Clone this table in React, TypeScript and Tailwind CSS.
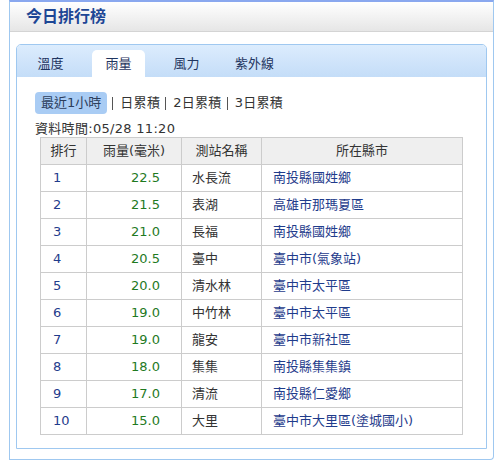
import React from "react";

const rows = [
  { rank: 1, rain: "22.5", station: "水長流", county: "南投縣國姓鄉" },
  { rank: 2, rain: "21.5", station: "表湖", county: "高雄市那瑪夏區" },
  { rank: 3, rain: "21.0", station: "長福", county: "南投縣國姓鄉" },
  { rank: 4, rain: "20.5", station: "臺中", county: "臺中市(氣象站)" },
  { rank: 5, rain: "20.0", station: "清水林", county: "臺中市太平區" },
  { rank: 6, rain: "19.0", station: "中竹林", county: "臺中市太平區" },
  { rank: 7, rain: "19.0", station: "龍安", county: "臺中市新社區" },
  { rank: 8, rain: "18.0", station: "集集", county: "南投縣集集鎮" },
  { rank: 9, rain: "17.0", station: "清流", county: "南投縣仁愛鄉" },
  { rank: 10, rain: "15.0", station: "大里", county: "臺中市大里區(塗城國小)" },
];

const tabs = ["溫度", "雨量", "風力", "紫外線"];
const periods = ["最近1小時", "日累積", "2日累積", "3日累積"];

export default function App() {
  return (
    <div
      className="w-[503px] h-[470px] bg-white px-[9px] text-[13px] text-[#333]"
      style={{ fontFamily: '"DejaVu Sans", "Noto Sans CJK TC", sans-serif' }}
    >
      <div className="border-x border-b border-[#9fc8f0] rounded-br-[4px] border-t-[2px] border-t-[#8aa8ef]">
        {/* Header */}
        <div className="h-[30px] flex items-center pl-[16px] bg-gradient-to-b from-white to-[#e6e6e6] border-b border-[#d4d4d4]">
          <span className="text-[16px] font-bold text-[#1d4695]">今日排行榜</span>
        </div>

        {/* Tab box */}
        <div className="mx-[6px] mt-[12px] mb-[10px] border border-[#9fc8f0] rounded-t-[5px] overflow-hidden">
          <div className="h-[32px] flex items-end pl-[7px] gap-[15px] bg-gradient-to-b from-[#dcecfd] to-[#c4ddf8]">
            {tabs.map((t, i) => (
              <div
                key={t}
                className={`h-[27px] w-[53px] flex items-center justify-center whitespace-nowrap text-[#1f3560] ${
                  i === 1 ? "bg-white rounded-t-[5px]" : ""
                }`}
              >
                {t}
              </div>
            ))}
          </div>

          <div className="pl-[18px] pt-[15px] pb-[13px]">
            <div className="flex items-center h-[22px]">
              {periods.map((p, i) => (
                <React.Fragment key={p}>
                  {i > 0 && <span className="w-px h-[13px] bg-[#555] ml-[5px] mr-[7px]" />}
                  <span
                    className={
                      i === 0
                        ? "h-[22px] px-[6px] flex items-center rounded-[4px] bg-[#a9ccf4] text-[#2c3e5c]"
                        : "text-[#333] tracking-[0.3px]"
                    }
                  >
                    {p}
                  </span>
                </React.Fragment>
              ))}
            </div>

            <div className="mt-[7px] h-[16px] leading-[16px] text-[#333] tracking-[0.3px]">資料時間:05/28 11:20</div>

            <table className="ml-[5px] border-collapse w-[423px]">
              <thead>
                <tr className="bg-[#efefef] h-[27px]">
                  <th className="w-[46px] border border-[#cccccc] font-normal text-center">排行</th>
                  <th className="w-[95px] border border-[#cccccc] font-normal text-center">雨量(毫米)</th>
                  <th className="w-[80px] border border-[#cccccc] font-normal text-center">測站名稱</th>
                  <th className="border border-[#cccccc] font-normal text-center">所在縣市</th>
                </tr>
              </thead>
              <tbody>
                {rows.map((r) => (
                  <tr key={r.rank} className="h-[27px]">
                    <td className="border border-[#cccccc] pl-[12px] text-[#1f3c8c]">{r.rank}</td>
                    <td className="border border-[#cccccc] pr-[21px] text-right text-[#1f7a1f]">{r.rain}</td>
                    <td className="border border-[#cccccc] pl-[10px] text-[#333]">{r.station}</td>
                    <td className="border border-[#cccccc] pl-[11px] text-[#1f3c8c]">{r.county}</td>
                  </tr>
                ))}
              </tbody>
            </table>
          </div>
        </div>
      </div>
    </div>
  );
}
